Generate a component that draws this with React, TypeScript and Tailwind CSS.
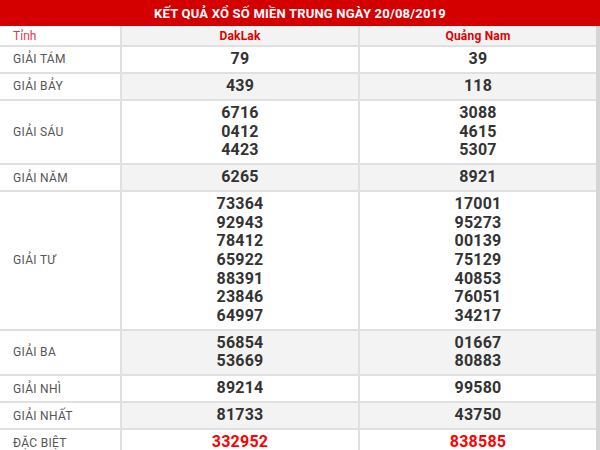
const rows: { label: string; a: string[]; b: string[]; special?: boolean }[] = [
  { label: "GIẢI TÁM", a: ["79"], b: ["39"] },
  { label: "GIẢI BẢY", a: ["439"], b: ["118"] },
  { label: "GIẢI SÁU", a: ["6716", "0412", "4423"], b: ["3088", "4615", "5307"] },
  { label: "GIẢI NĂM", a: ["6265"], b: ["8921"] },
  {
    label: "GIẢI TƯ",
    a: ["73364", "92943", "78412", "65922", "88391", "23846", "64997"],
    b: ["17001", "95273", "00139", "75129", "40853", "76051", "34217"],
  },
  { label: "GIẢI BA", a: ["56854", "53669"], b: ["01667", "80883"] },
  { label: "GIẢI NHÌ", a: ["89214"], b: ["99580"] },
  { label: "GIẢI NHẤT", a: ["81733"], b: ["43750"] },
  { label: "ĐẶC BIỆT", a: ["332952"], b: ["838585"], special: true },
];

function NumCell({ nums, gray, special, last }: { nums: string[]; gray: boolean; special?: boolean; last?: boolean }) {
  return (
    <div
      className={`flex flex-col items-center justify-center py-[3.2px] border-b-2 border-[#e0e0e0] ${
        last ? "" : "border-r-2"
      } ${gray ? "bg-[#f3f3f3]" : "bg-white"}`}
    >
      {nums.map((n) => (
        <div
          key={n}
          className={`text-[16px] leading-[18.6px] font-bold tracking-[0.2px] ${special ? "text-[#f00]" : "text-[#333]"}`}
        >
          {n}
        </div>
      ))}
    </div>
  );
}

export default function App() {
  return (
    <div className="w-[600px] h-[450px] overflow-hidden bg-white font-['Roboto',sans-serif]">
      <div className="h-[26px] bg-[#d40000] flex items-center justify-center text-white font-bold text-[13px] tracking-[0.2px] pt-[1px]">
        KẾT QUẢ XỔ SỐ MIỀN TRUNG NGÀY 20/08/2019
      </div>
      <div className="grid grid-cols-[122px_238px_236px] border-r-4 border-[#d5d5d5]">
        {/* header row */}
        <div className="h-[21px] flex items-center pl-[13px] text-[12px] text-[#e6334f] border-r-2 border-b-2 border-[#e0e0e0] bg-white">
          Tỉnh
        </div>
        <div className="h-[21px] flex items-center justify-center text-[12px] font-bold tracking-[0.2px] text-[#e00000] border-r-2 border-b-2 border-[#e0e0e0] bg-[#f3f3f3]">
          DakLak
        </div>
        <div className="h-[21px] flex items-center justify-center text-[12px] font-bold tracking-[0.2px] text-[#e00000] border-b-2 border-[#e0e0e0] bg-[#f3f3f3]">
          Quảng Nam
        </div>

        {rows.map((r, i) => {
          const gray = i % 2 === 1;
          return (
            <div key={r.label} className="contents">
              <div className="flex items-center pl-[13px] text-[12px] tracking-[0.3px] text-[#555] border-r-2 border-b-2 border-[#e0e0e0] bg-white">
                {r.label}
              </div>
              <NumCell nums={r.a} gray={gray} special={r.special} />
              <NumCell nums={r.b} gray={gray} special={r.special} last />
            </div>
          );
        })}
      </div>
    </div>
  );
}
